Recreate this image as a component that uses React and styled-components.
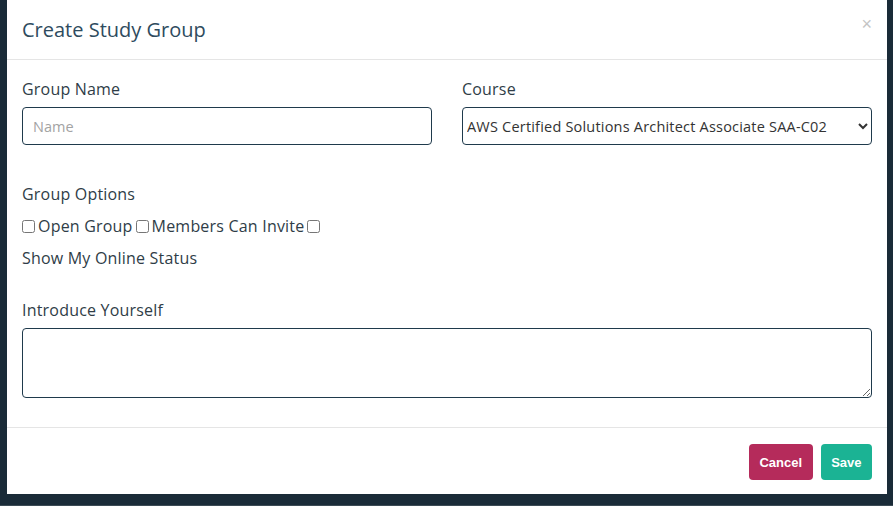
import React, { useState } from "react";
import styled, { createGlobalStyle } from "styled-components";

const GlobalStyle = createGlobalStyle`
	html, body {
		margin: 0;
		padding: 0;
		background: #1a2b38;
	}
	* {
		box-sizing: border-box;
	}
`;

const Page = styled.div`
	width: 893px;
	height: 506px;
	padding: 0 6px 12px 7px;
	background: #1a2b38;
	border-bottom: 1px solid #3c4b55;
	font-family: "Open Sans", "Liberation Sans", sans-serif;
`;

const Modal = styled.div`
	width: 880px;
	height: 494px;
	background: #fff;
	display: flex;
	flex-direction: column;
`;

const Header = styled.div`
	height: 60px;
	padding: 0 15px;
	display: flex;
	align-items: center;
	justify-content: space-between;
	border-bottom: 1px solid #e5e5e5;
`;

const Title = styled.h4`
	margin: 0;
	font-size: 20px;
	font-weight: 400;
	color: #2e4b5e;
`;

const Close = styled.button`
	border: none;
	background: none;
	padding: 0;
	margin-top: -12px;
	font-size: 18px;
	line-height: 1;
	color: #c4c4c4;
	cursor: pointer;
	font-family: "Liberation Sans", sans-serif;
`;

const Body = styled.div`
	flex: 1;
	padding: 17px 15px 0;
	border-bottom: 1px solid #e5e5e5;
`;

const Row = styled.div`
	display: grid;
	grid-template-columns: 1fr 1fr;
	gap: 30px;
`;

const Field = styled.div`
	display: flex;
	flex-direction: column;
	margin-top: ${({ $mt }) => $mt || 0}px;
`;

const Label = styled.label`
	display: block;
	font-size: 16px;
	letter-spacing: 0.2px;
	line-height: 24px;
	color: #2f3d47;
	margin-bottom: ${({ $mb }) => $mb ?? 6}px;
`;

const Input = styled.input`
	height: 38px;
	padding: 0 10px;
	border: 1px solid #1f3a4c;
	border-radius: 4px;
	font-family: inherit;
	font-size: 14.5px;
	color: #333;
	outline: none;

	&::placeholder {
		color: #a3a3a3;
	}
`;

const Select = styled.select`
	height: 38px;
	padding: 0;
	border: 1px solid #1f3a4c;
	border-radius: 4px;
	font-family: inherit;
	font-size: 14.5px;
	letter-spacing: 0.2px;
	color: #333;
	background: #fff;
	outline: none;
`;

const Options = styled.div`
	margin-top: 37px;
`;

const CheckRow = styled.div`
	display: flex;
	align-items: center;
	height: 24px;
	margin-top: 8px;
	font-size: 16px;
	letter-spacing: 0.2px;
	color: #2f3d47;
`;

const Check = styled.input`
	width: 13px;
	height: 13px;
	margin: 0 3px 0 0;
`;

const CheckText = styled.span`
	margin-right: 3px;
`;

const TextArea = styled.textarea`
	display: block;
	width: 100%;
	height: 70px;
	border: 1px solid #1f3a4c;
	border-radius: 4px;
	font-family: inherit;
	font-size: 14px;
	outline: none;
`;

const Footer = styled.div`
	height: 66px;
	padding: 16px 15px 0;
	display: flex;
	justify-content: flex-end;
	gap: 8px;
`;

const Button = styled.button`
	height: 36px;
	padding: 0 10.5px;
	border: none;
	border-radius: 4px;
	background: ${({ $color }) => $color};
	color: #fff;
	font-family: "Liberation Sans", Arial, sans-serif;
	font-weight: 700;
	font-size: 13px;
	cursor: pointer;
`;

const App = () => {
	const [name, setName] = useState("");

	return (
		<>
			<GlobalStyle />
			<Page>
				<Modal>
					<Header>
						<Title>Create Study Group</Title>
						<Close aria-label="Close">×</Close>
					</Header>
					<Body>
						<Row>
							<Field>
								<Label>Group Name</Label>
								<Input
									placeholder="Name"
									value={name}
									onChange={(e) => setName(e.target.value)}
								/>
							</Field>
							<Field>
								<Label>Course</Label>
								<Select defaultValue="saa">
									<option value="saa">AWS Certified Solutions Architect Associate SAA-C02</option>
								</Select>
							</Field>
						</Row>

						<Options>
							<Label $mb={0}>Group Options</Label>
							<CheckRow>
								<Check type="checkbox" />
								<CheckText>Open Group</CheckText>
								<Check type="checkbox" />
								<CheckText>Members Can Invite</CheckText>
								<Check type="checkbox" />
							</CheckRow>
							<CheckRow>Show My Online Status</CheckRow>
						</Options>

						<Field $mt={28}>
							<Label>Introduce Yourself</Label>
							<TextArea />
						</Field>
					</Body>
					<Footer>
						<Button $color="#b52b5b">Cancel</Button>
						<Button $color="#1bb394">Save</Button>
					</Footer>
				</Modal>
			</Page>
		</>
	);
};

export default App;
